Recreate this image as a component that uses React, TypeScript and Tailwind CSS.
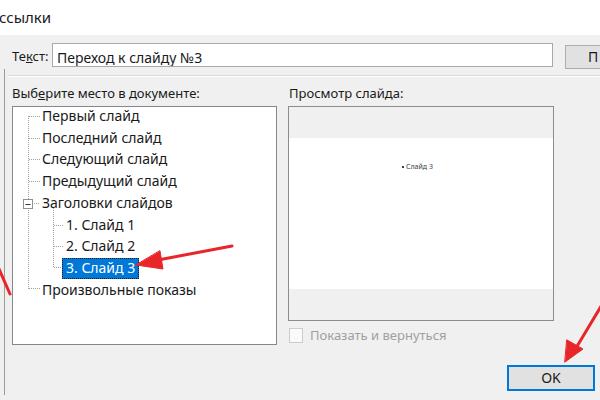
import React from "react";

const font = { fontFamily: '"Noto Sans", "Open Sans", sans-serif' };

function TreeRow({
  label,
  indent,
  selected,
}: {
  label: string;
  indent: number;
  selected?: boolean;
}) {
  return (
    <div className="h-[21.75px] flex items-center" style={{ paddingLeft: indent }}>
      <span
        className={
          selected
            ? "h-[21px] px-[3px] flex items-center bg-[#0078d7] text-white border border-dotted border-[#1a1a1a]"
            : "h-[21px] px-[4px] flex items-center"
        }
      >
        {label}
      </span>
    </div>
  );
}

export default function App() {
  return (
    <div
      className="w-[600px] h-[400px] relative overflow-hidden bg-[#f0f0f0] text-[#1a1a1a] text-[14px] leading-none"
      style={font}
    >
      {/* title bar */}
      <div className="h-[35px] bg-white flex items-center">
        <span className="text-[15px] -ml-px pb-[1px]">ссылки</span>
      </div>

      {/* text row */}
      <div className="flex items-start mt-[8px]">
        <span className="ml-[12px] w-[40px] pt-[7px] text-[13px] shrink-0">
          Те<span className="underline">к</span>ст:
        </span>
        <div className="w-[501px] h-[24px] bg-white border border-[#a9a9a9] overflow-hidden shrink-0">
          <div className="pl-[4px] pt-[7px] whitespace-nowrap">Переход к слайду №3</div>
        </div>
        <button className="ml-[12px] mt-[2px] w-[70px] h-[24px] bg-[#e1e1e1] border border-[#adadad] text-left pl-[22px] shrink-0">
          П
        </button>
      </div>

      {/* separator */}
      <div className="mt-[6px] ml-[8px] h-px bg-[#dadada]" />
      <div className="ml-[8px] h-px bg-white" />

      {/* lower area */}
      <div className="flex -mt-[8px]">
        <div className="w-[4px]" />
        <div className="w-px bg-[#9a9a9a] h-[326px]" />
        <div className="ml-[7px] pt-[8px] flex-1 flex flex-col">
          <div className="flex gap-[11px]">
            {/* left column */}
            <div className="flex flex-col">
              <div className="h-[29px] flex items-center pt-[3px] text-[13px]">
                Выб<span className="underline">е</span>рите место в документе:
              </div>
              <div className="relative w-[265px] h-[239px] bg-white border border-[#828790]">
                <svg
                  className="absolute left-0 top-0"
                  width="263"
                  height="237"
                  viewBox="0 0 263 237"
                >
                  <g stroke="#a0a0a0" strokeWidth="1" strokeDasharray="1 1" fill="none">
                    <path d="M15.5 9 V182" />
                    <path d="M16 9.5 H27" />
                    <path d="M16 31.5 H27" />
                    <path d="M16 52.5 H27" />
                    <path d="M16 74.5 H27" />
                    <path d="M21 96.5 H27" />
                    <path d="M16 181.5 H27" />
                    <path d="M40.5 101 V160" />
                    <path d="M41 118.5 H50" />
                    <path d="M41 139.5 H50" />
                    <path d="M41 160.5 H50" />
                  </g>
                  <rect x="10.5" y="92.5" width="9" height="9" fill="white" stroke="#919191" />
                  <path d="M12.5 97.5 H17.5" stroke="#333" />
                </svg>
                <div className="relative -mt-[2px]">
                  <TreeRow label="Первый слайд" indent={25} />
                  <TreeRow label="Последний слайд" indent={25} />
                  <TreeRow label="Следующий слайд" indent={25} />
                  <TreeRow label="Предыдущий слайд" indent={25} />
                  <TreeRow label="Заголовки слайдов" indent={25} />
                  <TreeRow label="1. Слайд 1" indent={49} />
                  <TreeRow label="2. Слайд 2" indent={49} />
                  <TreeRow label="3. Слайд 3" indent={49} selected />
                  <TreeRow label="Произвольные показы" indent={25} />
                </div>
              </div>
            </div>

            {/* right column */}
            <div className="flex flex-col">
              <div className="h-[29px] flex items-center pt-[3px] pl-[1px] text-[13px]">
                Просмотр слайда:
              </div>
              <div className="w-[266px] h-[215px] bg-[#f0f0f0] border border-[#8c8c8c] flex flex-col">
                <div className="h-[31px]" />
                <div className="h-[151px] bg-white flex items-start">
                  <div className="mt-[25px] ml-[113px] flex items-center gap-[2px] text-[7px] text-[#404040]">
                    <span className="w-[2px] h-[2px] bg-[#404040]" />
                    Слайд 3
                  </div>
                </div>
              </div>
              <div className="mt-[7px] flex items-center">
                <span className="w-[14px] h-[15px] ml-[1px] bg-[#fafafa] border border-[#cccccc]" />
                <span className="ml-[7px] text-[13px] text-[#a0a0a0]">Показать и вернуться</span>
              </div>
            </div>
          </div>

          {/* ok row */}
          <div className="flex justify-end mt-[20px]">
            <button className="mr-[5px] w-[88px] h-[26px] bg-[#e1e1e1] border-2 border-[#0078d7] text-[14px]">
              OK
            </button>
          </div>
        </div>
      </div>

      {/* red annotation arrows */}
      <svg
        className="absolute inset-0 pointer-events-none"
        width="600"
        height="400"
        viewBox="0 0 600 400"
      >
        <g fill="#e8262a" stroke="#e8262a" strokeLinecap="round">
          <path d="M232 246 L158 260" strokeWidth="3" fill="none" />
          <polygon points="136,265 163,269 160,251" strokeWidth="1" />
          <path d="M-4 262 L10 294" strokeWidth="3" fill="none" />
          <path d="M603 303 L576 348" strokeWidth="3" fill="none" />
          <polygon points="565,362 583,349 567,340" strokeWidth="1" />
        </g>
      </svg>
    </div>
  );
}
